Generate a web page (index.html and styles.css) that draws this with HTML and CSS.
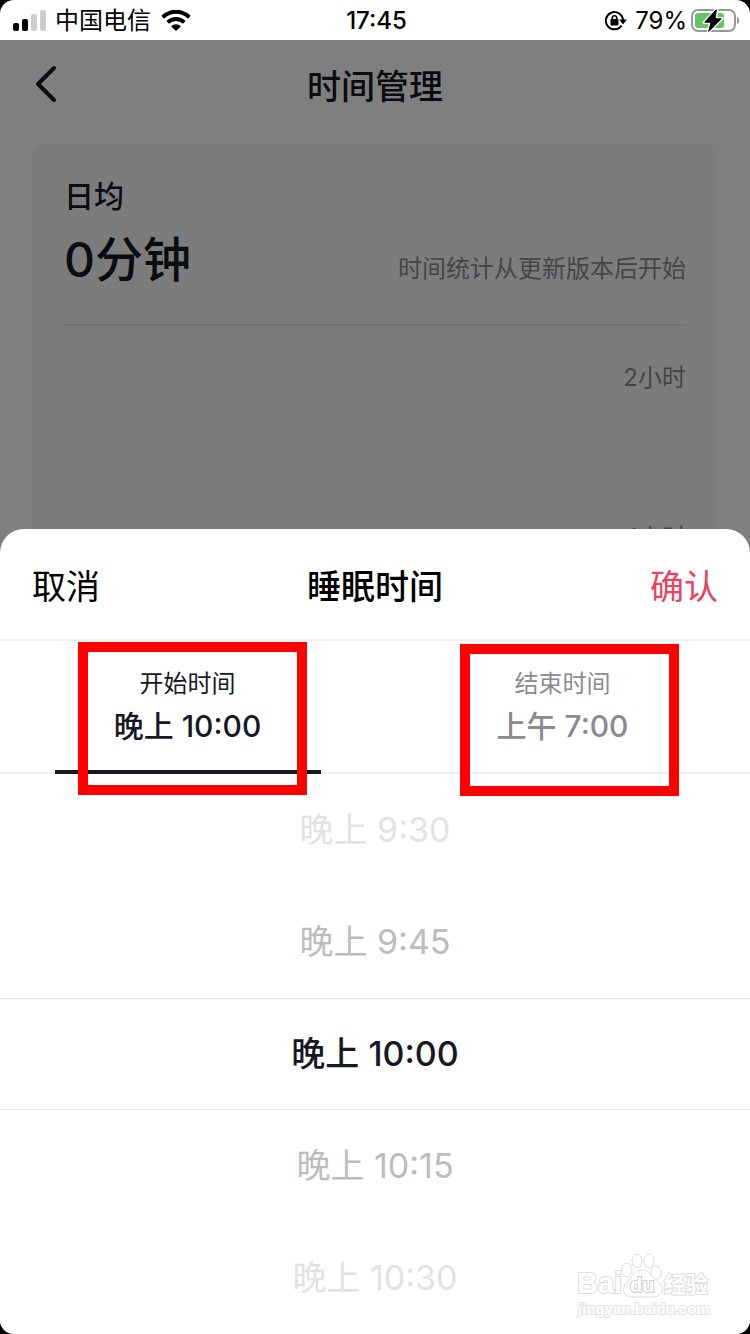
FILE: index.html
```html
<!DOCTYPE html>
<html lang="zh-CN">
<head>
    <meta charset="UTF-8">
    <meta name="viewport" content="width=device-width, initial-scale=1.0">
    <link rel="stylesheet" href="styles.css">
    <title>时间管理</title>
</head>
<body>
    <div class="screen">
        <div class="status-bar">
            <div class="status-left">
                <svg class="signal" width="34" height="22" viewBox="0 0 34 22">
                    <rect x="0" y="13" width="6" height="8" rx="2"/>
                    <rect x="9" y="9" width="6" height="12" rx="2"/>
                    <rect x="18" y="4" width="6" height="17" rx="2" fill="#ccc"/>
                    <rect x="27" y="0" width="6" height="21" rx="2" fill="#ccc"/>
                </svg>
                <span>中国电信</span>
                <svg width="30" height="22" viewBox="0 0 30 22" fill="none" stroke="#000" stroke-width="4">
                    <path d="M1.7 7.2C9.2 0 20.8 0 28.3 7.2"/>
                    <path d="M6.7 12.4C11.4 7.900 18.6 7.900 23.3 12.4"/>
                    <path d="M15 21L10 16.2C12.6 13.5 17.4 13.5 20 16.2Z" fill="#000" stroke="none"/>
                </svg>
            </div>
            <span class="clock">17:45</span>
            <div class="status-right">
                <svg width="22" height="20" viewBox="0 0 22 20">
                    <path d="M18 9A8.600 8.600 0 1 0 16.500 14.600" fill="none" stroke="#000" stroke-width="2"/>
                    <path d="M14.200 8.400H21.800L18 13.400Z"/>
                    <rect x="5.500" y="8" width="8" height="6.500" rx="1"/>
                    <path d="M7.300 8.500V7a2.200 2.200 0 0 1 4.400 0V8.500" fill="none" stroke="#000" stroke-width="1.600"/>
                </svg>
                <span>79%</span>
                <svg class="battery" width="49" height="26" viewBox="0 0 49 26">
                    <rect x="1" y="2" width="43" height="21" rx="6" fill="none" stroke="#999" stroke-width="2"/>
                    <rect x="4" y="5" width="29" height="15" rx="3" fill="#65c466"/>
                    <path d="M46 9v7c3-1 3-6 0-7z" fill="#999"/>
                    <path d="M26 1L13 14.500H19.500L17 24.500L31 10.500H24.500Z" stroke="#fff" stroke-width="3" paint-order="stroke" stroke-linejoin="round"/>
                    <path d="M25 2L14 14H20.500L18 23L30 11H23.500Z" stroke="#000" stroke-width="1" stroke-linejoin="round"/>
                </svg>
            </div>
        </div>

        <main class="page">
            <header class="nav">
                <button class="back" type="button" aria-label="返回">
                    <svg width="22" height="38" viewBox="0 0 22 38" fill="none" stroke="#161823" stroke-width="4" stroke-linecap="round" stroke-linejoin="round">
                        <path d="M19 3L3 19L19 35"/>
                    </svg>
                </button>
                <h1>时间管理</h1>
            </header>
            <section class="card">
                <h2>日均</h2>
                <div class="summary">
                    <strong>0分钟</strong>
                    <span>时间统计从更新版本后开始</span>
                </div>
                <div class="axis">
                    <span>2小时</span>
                    <span>1小时</span>
                </div>
            </section>
        </main>
        <div class="backdrop"></div>

        <div class="sheet" role="dialog" aria-labelledby="sheet-title">
            <div class="sheet-header">
                <button class="cancel" type="button">取消</button>
                <h2 id="sheet-title">睡眠时间</h2>
                <button class="confirm" type="button">确认</button>
            </div>
            <div class="tabs" role="tablist">
                <button class="tab active" type="button" role="tab" aria-selected="true">
                    <span class="tab-label">开始时间</span>
                    <span class="tab-value">晚上 10:00</span>
                    <span class="mark mark-start"></span>
                </button>
                <button class="tab" type="button" role="tab" aria-selected="false">
                    <span class="tab-label">结束时间</span>
                    <span class="tab-value">上午 7:00</span>
                    <span class="mark mark-end"></span>
                </button>
            </div>
            <ul class="picker" role="listbox" aria-label="开始时间">
                <li class="edge-top" role="option">晚上 9:30</li>
                <li role="option">晚上 9:45</li>
                <li class="selected" role="option" aria-selected="true">晚上 10:00</li>
                <li role="option">晚上 10:15</li>
                <li class="edge-bottom" role="option">晚上 10:30</li>
            </ul>
            <svg class="watermark" width="140" height="70" viewBox="0 0 140 70">
                <g class="paw">
                    <ellipse cx="52" cy="20" rx="5" ry="7"/>
                    <ellipse cx="62" cy="11" rx="5" ry="7"/>
                    <ellipse cx="74" cy="11" rx="5" ry="7"/>
                    <ellipse cx="81" cy="23" rx="5" ry="7"/>
                    <path d="M67 20C58 20 58 27 52 32C46 38 48 47 57 47H78C88 47 90 38 84 33C77 28 76 20 67 20Z"/>
                </g>
                <text class="wm-brand" x="2" y="43">Bai</text>
                <text class="wm-du" x="55" y="42">du</text>
                <text class="wm-cn" x="89" y="42">经验</text>
                <text class="wm-url" x="3" y="64">jingyan.baidu.com</text>
            </svg>
        </div>
    </div>

    <script>
        const tabs = document.querySelectorAll('.tab');

        // Switch between start and end time
        tabs.forEach(tab => {
            tab.addEventListener('click', () => {
                tabs.forEach(t => {
                    t.classList.toggle('active', t === tab);
                    t.setAttribute('aria-selected', t === tab);
                });
            });
        });
    </script>
</body>
</html>
```

FILE: styles.css
```css
* {
    box-sizing: border-box;
}

body {
    margin: 0;
    background: #000;
    color: #161823;
    font-family: Inter, "Noto Sans CJK SC", sans-serif;
}

h1, h2, ul {
    margin: 0;
    padding: 0;
}

button {
    padding: 0;
    border: 0;
    background: none;
    color: inherit;
    font: inherit;
    cursor: pointer;
}

.screen {
    position: relative;
    display: flex;
    flex-direction: column;
    min-height: 100vh;
    background: #fff;
    border-radius: 14px;
    overflow: hidden;
}

/* Status bar */
.status-bar {
    display: grid;
    grid-template-columns: 1fr auto 1fr;
    align-items: center;
    height: 40px;
    padding: 1px 10px 0 13px;
    color: #000;
    font-size: 24px;
    line-height: 40px;
}

.status-left,
.status-right {
    display: flex;
    align-items: center;
    gap: 8px;
}

.status-left span {
    margin-right: 2px;
}

.status-right {
    justify-content: flex-end;
}

.battery {
    margin-left: -4px;
}

.clock {
    font-weight: 500;
}

/* Page behind the sheet */
.page {
    flex: 1;
    display: flex;
    flex-direction: column;
    padding: 0 32px;
}

.nav {
    display: grid;
    grid-template-columns: 1fr auto 1fr;
    align-items: center;
    height: 88px;
}

.back {
    display: flex;
    justify-self: start;
    padding-left: 3px;
}

.nav h1 {
    font-size: 34px;
    font-weight: 500;
}

.card {
    flex: 1;
    margin-top: 16px;
    padding: 32px;
    background: #f8f8f8;
    border-radius: 16px;
}

.card h2 {
    font-size: 30px;
    font-weight: 500;
    line-height: 40px;
}

.summary {
    display: flex;
    justify-content: space-between;
    align-items: baseline;
    height: 110px;
    padding-top: 10px;
    border-bottom: 2px solid #e6e6e6;
}

.summary strong {
    font-size: 48px;
    font-weight: 500;
    line-height: 68px;
}

.summary span,
.axis {
    color: #8a8b91;
    font-size: 24px;
}

.axis {
    display: flex;
    flex-direction: column;
    align-items: flex-end;
    gap: 120px;
    padding-top: 32px;
    line-height: 40px;
}

.backdrop {
    position: absolute;
    inset: 40px 0 0;
    background: rgba(0, 0, 0, 0.5);
}

/* Bottom sheet */
.sheet {
    position: absolute;
    left: 0;
    right: 0;
    bottom: 0;
    background: #fff;
    border-radius: 24px 24px 0 0;
}

.sheet-header {
    display: grid;
    grid-template-columns: 1fr auto 1fr;
    align-items: center;
    height: 112px;
    padding: 0 32px;
    border-bottom: 2px solid #f0f0f0;
    color: #000;
    font-size: 34px;
}

.sheet-header h2 {
    font-size: 34px;
    font-weight: 500;
}

.cancel {
    justify-self: start;
}

.confirm {
    justify-self: end;
    color: #ea435d;
}

.tabs {
    display: flex;
    height: 133px;
    border-bottom: 2px solid #f0f0f0;
}

.tab {
    position: relative;
    flex: 1;
    display: flex;
    flex-direction: column;
    align-items: center;
    padding-top: 25px;
    color: #8a8b91;
    font-weight: 500;
}

.tab-label {
    font-size: 24px;
    font-weight: 400;
    line-height: 36px;
}

.tab-value {
    margin-top: 2px;
    font-size: 30px;
    line-height: 44px;
}

.tab.active {
    color: #161823;
}

.tab.active::after {
    content: "";
    position: absolute;
    left: 55px;
    right: 54px;
    bottom: -2px;
    height: 4px;
    background: #161823;
}

/* Red frames around both tabs */
.mark {
    position: absolute;
    z-index: 1;
    top: 1px;
    height: 153px;
    border: 10px solid #f00;
}

.mark-start {
    left: 78px;
    right: 68px;
}

.mark-end {
    top: 3px;
    left: 85px;
    right: 71px;
    height: 152px;
}

/* Time picker */
.picker {
    list-style: none;
    color: #bcbcbe;
    font-size: 34px;
    line-height: 112px;
    text-align: center;
}

.picker .selected {
    border: solid #e1e1e2;
    border-width: 1px 0;
    color: #161823;
    font-weight: 500;
    line-height: 110px;
}

.picker .edge-top,
.picker .edge-bottom {
    color: #e2e2e3;
}

.watermark {
    position: absolute;
    right: 35px;
    bottom: 14px;
    fill: #fff;
    stroke: #ddd;
    stroke-width: 1px;
}

.watermark text {
    font-family: "Liberation Sans", "Noto Sans CJK SC", sans-serif;
    font-weight: 700;
    paint-order: stroke;
    stroke-width: 2px;
}

.wm-brand {
    font-size: 29px;
}

.watermark .wm-du {
    font-size: 20px;
    stroke: #ccc;
}

.watermark .wm-cn {
    font-family: "Noto Sans CJK SC", sans-serif;
    font-size: 22px;
}

.watermark .wm-url {
    font-size: 15px;
    stroke: #e4e4e4;
}
```
